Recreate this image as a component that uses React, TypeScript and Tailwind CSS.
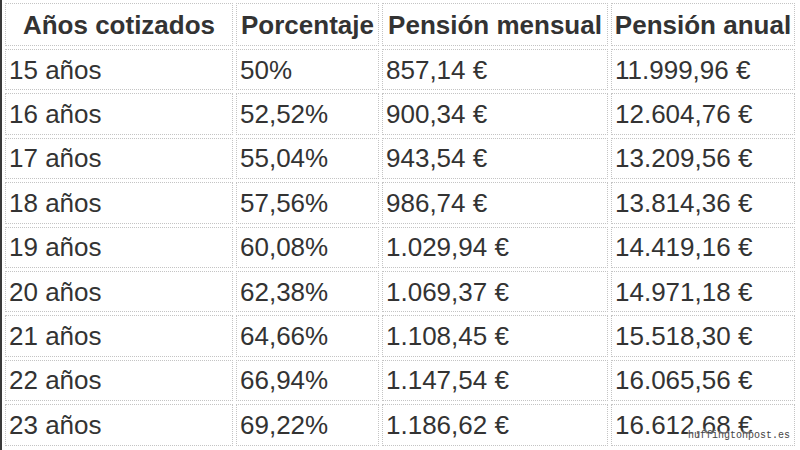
import React from 'react';

const rows = [
  ['15 años', '50%', '857,14 €', '11.999,96 €'],
  ['16 años', '52,52%', '900,34 €', '12.604,76 €'],
  ['17 años', '55,04%', '943,54 €', '13.209,56 €'],
  ['18 años', '57,56%', '986,74 €', '13.814,36 €'],
  ['19 años', '60,08%', '1.029,94 €', '14.419,16 €'],
  ['20 años', '62,38%', '1.069,37 €', '14.971,18 €'],
  ['21 años', '64,66%', '1.108,45 €', '15.518,30 €'],
  ['22 años', '66,94%', '1.147,54 €', '16.065,56 €'],
  ['23 años', '69,22%', '1.186,62 €', '16.612,68 €'],
];

const headers = ['Años cotizados', 'Porcentaje', 'Pensión mensual', 'Pensión anual'];
const widths = ['w-[228px]', 'w-[143px]', 'w-[226px]', 'w-[184px]'];

export default function App() {
  return (
    <div className="relative w-[800px] h-[450px] overflow-hidden bg-white font-['Liberation_Sans',Arial,sans-serif] text-[#333]">
      <div className="h-full border-l-2 border-[#3a3a3a]">
        <table className="table-fixed border-separate border-spacing-[3px] text-[26px] leading-none">
          <thead>
            <tr>
              {headers.map((h, i) => (
                <th
                  key={h}
                  className={`${widths[i]} h-[43px] border border-dotted border-[#c4c4c4] text-center align-middle font-bold whitespace-nowrap p-0`}
                >
                  {h}
                </th>
              ))}
            </tr>
          </thead>
          <tbody>
            {rows.map((r) => (
              <tr key={r[0]}>
                {r.map((c, i) => (
                  <td
                    key={i}
                    className={`${widths[i]} h-[41.4px] border border-dotted border-[#c4c4c4] pl-[3px] py-0 pr-0 align-middle whitespace-nowrap`}
                  >
                    {c}
                  </td>
                ))}
              </tr>
            ))}
          </tbody>
        </table>
      </div>

      {/* watermark */}
      <span className="absolute right-[10px] bottom-[9px] font-['Liberation_Mono',monospace] text-[10px] leading-none text-[#444] [text-shadow:0_0_2px_#fff,0_0_2px_#fff]">
        huffingtonpost.es
      </span>
    </div>
  );
}
